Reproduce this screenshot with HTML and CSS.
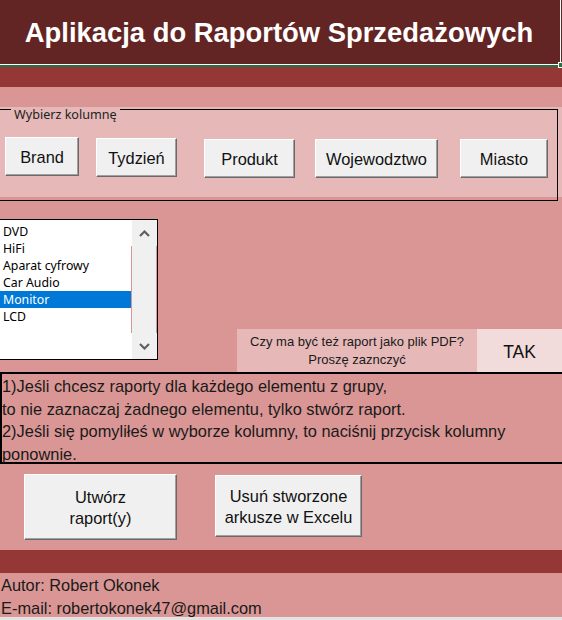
FILE: index.html
```html
<!DOCTYPE html>
<html lang="pl">
<head>
<meta charset="utf-8">
<title>Aplikacja do Raportów Sprzedażowych</title>
<link rel="stylesheet" href="styles.css">
</head>
<body>
<div class="app">
  <header class="title"><h1>Aplikacja do Raportów Sprzedażowych</h1></header>
  <div class="sel-line"><span class="handle"></span></div>
  <div class="band"></div>
  <div class="spacer"></div>

  <section class="choose">
    <div class="frame">
      <span class="legend">Wybierz kolumnę</span>
      <div class="btn-row">
        <button class="btn b-brand">Brand</button>
        <button class="btn b-week">Tydzień</button>
        <button class="btn b-prod">Produkt</button>
        <button class="btn b-woj">Wojewodztwo</button>
        <button class="btn b-city">Miasto</button>
      </div>
    </div>
  </section>

  <section class="mid">
    <div class="listbox">
      <ul class="items">
        <li>DVD</li>
        <li>HiFi</li>
        <li>Aparat cyfrowy</li>
        <li>Car Audio</li>
        <li class="selected">Monitor</li>
        <li>LCD</li>
      </ul>
      <div class="scroll">
        <div class="arrow arrow-up">
          <svg width="11" height="7" viewBox="0 0 11 7"><polyline points="1,6 5.5,1.5 10,6" fill="none" stroke="#606060" stroke-width="2.2"/></svg>
        </div>
        <div class="track"></div>
        <div class="arrow arrow-down">
          <svg width="11" height="7" viewBox="0 0 11 7"><polyline points="1,1 5.5,5.5 10,1" fill="none" stroke="#606060" stroke-width="2.2"/></svg>
        </div>
      </div>
    </div>
    <div class="pdf">
      <div class="pdf-q">Czy ma być też raport jako plik PDF?<br>Proszę zaznczyć</div>
      <div class="pdf-a">TAK</div>
    </div>
  </section>

  <section class="info">
    <p>1)Jeśli chcesz raporty dla każdego elementu z grupy,<br>to nie zaznaczaj żadnego elementu, tylko stwórz raport.<br>2)Jeśli się pomyliłeś w wyborze kolumny, to naciśnij przycisk kolumny<br>ponownie.</p>
  </section>

  <section class="actions">
    <button class="btn big b-create">Utwórz<br>raport(y)</button>
    <button class="btn big b-delete">Usuń stworzone<br>arkusze w Excelu</button>
  </section>

  <div class="band band-foot"></div>
  <footer class="author">
    <p>Autor: Robert Okonek</p>
    <p>E-mail: robertokonek47@gmail.com</p>
  </footer>
  <div class="bottom-strip"></div>
</div>
</body>
</html>
```

FILE: styles.css
```css
* { box-sizing: border-box; }

html, body {
  margin: 0;
  padding: 0;
}

body {
  width: 562px;
  height: 620px;
  overflow: hidden;
  background: #d99694;
  font-family: "Liberation Sans", Arial, sans-serif;
  color: #111;
}

.app {
  width: 562px;
  height: 620px;
  display: flex;
  flex-direction: column;
}

/* Title */
.title {
  height: 65px;
  background: linear-gradient(to right, #632523 0, #632523 560px, #ffffff 560px, #ffffff 561px, #632523 561px);
  border-bottom: 1px solid #ffffff;
  display: flex;
  align-items: center;
  justify-content: center;
  flex: none;
}

.title h1 {
  margin: 1px 4px 0 0;
  font-family: "Liberation Sans", Arial, sans-serif;
  font-weight: bold;
  font-size: 27.4px;
  color: #ffffff;
}

.sel-line {
  position: relative;
  height: 2px;
  width: 558px;
  background: #217346;
  flex: none;
}

.handle {
  position: absolute;
  right: -5px;
  top: -3px;
  width: 5px;
  height: 6px;
  background: #217346;
  border: 1px solid #ffffff;
}

.band {
  height: 20px;
  background: #953735;
  flex: none;
}

.spacer {
  height: 20px;
  flex: none;
}

/* Column chooser */
.choose {
  height: 94px;
  padding-top: 2px;
  background: linear-gradient(#e6b9b8, #e6b9b8) top left / 100% 90px no-repeat;
  flex: none;
}

.frame {
  position: relative;
  margin-left: -2px;
  width: 560px;
  height: 92px;
  border: 1px solid #000;
  padding-top: 28px;
}

.legend {
  position: absolute;
  left: 12px;
  top: -3px;
  padding: 0 3px;
  background: #e6b9b8;
  font-family: "Noto Sans", "Liberation Sans", sans-serif;
  font-size: 12.6px;
  line-height: 16px;
  color: #222;
}

.btn-row {
  display: flex;
  align-items: flex-start;
}

.btn {
  height: 39px;
  background: #f0f0f0;
  border-top: 1px solid #ffffff;
  border-left: 1px solid #ffffff;
  border-right: 1px solid #696969;
  border-bottom: 1px solid #696969;
  box-shadow: inset -1px -1px 0 #a0a0a0;
  font-family: "Liberation Sans", Arial, sans-serif;
  font-size: 16.4px;
  color: #111;
  padding: 0;
  margin: 0;
}

.b-brand { width: 74px; margin-left: 6px; margin-top: -1px; }
.b-week  { width: 81px; margin-left: 17px; }
.b-prod  { width: 91px; margin-left: 27px; margin-top: 1px; }
.b-woj   { width: 123px; margin-left: 20px; margin-top: 1px; }
.b-city  { width: 88px; margin-left: 22px; margin-top: 1px; }

.btn-row .btn { padding-top: 1px; }

/* Middle row */
.mid {
  height: 171px;
  display: flex;
  align-items: flex-start;
  flex: none;
}

.listbox {
  margin-top: 18px;
  margin-left: -1px;
  width: 159px;
  height: 141px;
  border: 1px solid #000;
  background: #ffffff;
  display: flex;
}

.items {
  list-style: none;
  margin: 0;
  padding: 3px 0 0 0;
  width: 132px;
  font-family: "Noto Sans", "Liberation Sans", sans-serif;
  font-size: 12.3px;
  color: #000;
}

.items li {
  height: 17px;
  line-height: 17px;
  padding-left: 3px;
  white-space: nowrap;
}

.items li.selected {
  background: #0078d7;
  color: #ffffff;
}

.scroll {
  width: 25px;
  background: #f0f0f0;
  display: flex;
  flex-direction: column;
}

.arrow {
  height: 26px;
  display: flex;
  align-items: center;
  justify-content: center;
  padding-right: 1px;
}

.arrow svg { display: block; }

.track {
  flex: 1;
  border-right: 1px solid #d99694;
  box-shadow: -1px 0 0 #d99694;
}

.pdf {
  margin-left: auto;
  align-self: flex-end;
  display: flex;
  height: 43px;
}

.pdf-q {
  width: 240px;
  background: #e6b9b8;
  font-size: 13px;
  line-height: 18px;
  text-align: center;
  padding-top: 4px;
  color: #1a1a1a;
  white-space: nowrap;
}

.pdf-a {
  width: 85px;
  background: #f2dcdb;
  font-size: 17.5px;
  display: flex;
  align-items: center;
  justify-content: center;
  padding-top: 4px;
  color: #111;
}

/* Instructions */
.info {
  width: 562px;
  height: 92px;
  border-top: 2px solid #000;
  border-bottom: 2px solid #000;
  border-left: 2px solid #000;
  border-right: 0;
  flex: none;
}

.info p {
  margin: 0;
  padding-top: 1px;
  font-size: 16.4px;
  line-height: 22.6px;
  color: #1a1a1a;
  white-space: nowrap;
}

/* Actions */
.actions {
  height: 86px;
  display: flex;
  align-items: flex-start;
  flex: none;
}

.btn.big {
  line-height: 21px;
  padding-top: 2px;
}

.b-create { width: 153px; height: 66px; margin-left: 24px; margin-top: 10px; }
.b-delete { width: 147px; height: 62px; margin-left: 38px; margin-top: 11px; }

.band-foot {
  height: 23px;
}

.author {
  height: 44px;
  flex: none;
}

.author p {
  margin: 0;
  font-size: 16.4px;
  line-height: 23px;
  color: #1a1a1a;
  padding-left: 1px;
}

.author p:first-child { padding-top: 1px; }

.bottom-strip {
  height: 3px;
  background: #e3e3e3;
  flex: none;
}
```
